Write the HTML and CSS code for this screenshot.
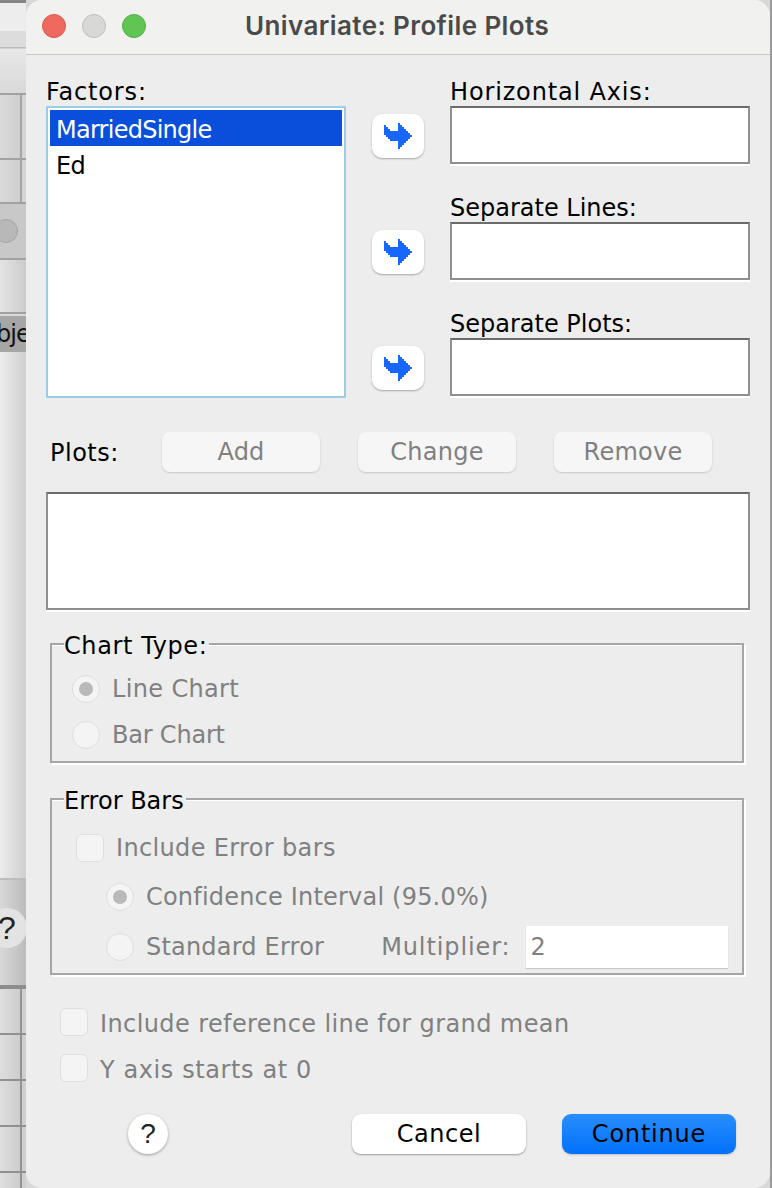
FILE: index.html
```html
<!DOCTYPE html>
<html lang="en">
<head>
  <meta charset="UTF-8" />
  <title>Univariate: Profile Plots</title>
  <link rel="stylesheet" href="styles.css">
</head>
<body>
  <div class="screen">
    <!-- bit of the data editor showing behind the dialog -->
    <div class="behind">
      <div class="strip strip-top"></div>
      <div class="strip strip-cell strip-cell-tall"></div>
      <div class="strip strip-cell"></div>
      <div class="strip strip-pill"><span class="pill"></span></div>
      <div class="strip strip-light"></div>
      <div class="strip strip-obj">bje</div>
      <div class="strip strip-long"></div>
      <div class="strip strip-help"><span class="help-back">?</span></div>
      <div class="strip strip-grid"></div>
      <div class="strip strip-grid"></div>
      <div class="strip strip-grid"></div>
      <div class="strip strip-grid"></div>
      <div class="strip strip-grid"></div>
    </div>

    <div class="dialog">
      <div class="titlebar">
        <span class="light red"></span>
        <span class="light grey"></span>
        <span class="light green"></span>
        <h1>Univariate: Profile Plots</h1>
      </div>

      <div class="content">
        <div class="top">
          <div class="factors">
            <label class="lbl wide">Factors:</label>
            <ul class="list">
              <li class="selected">MarriedSingle</li>
              <li>Ed</li>
            </ul>
          </div>
          <div class="targets">
            <div class="target">
              <button class="arrow-btn" type="button">
                <svg class="arrow" viewBox="0 0 28 26"><polygon points="14,0 16,0 16,2 18,2 18,4 20,4 20,6 22,6 22,8 24,8 24,10 26,10 26,12 28,12 28,14 26,14 26,16 24,16 24,18 22,18 22,20 20,20 20,22 18,22 18,24 16,24 16,26 14,26 14,18 6,18 6,16 4,16 4,14 2,14 2,12 0,12 0,2 2,2 2,4 4,4 4,6 6,6 6,8 14,8"/></svg>
              </button>
              <div class="field">
                <label class="lbl wide">Horizontal Axis:</label>
                <div class="box box-small"></div>
              </div>
            </div>
            <div class="target">
              <button class="arrow-btn" type="button">
                <svg class="arrow" viewBox="0 0 28 26"><polygon points="14,0 16,0 16,2 18,2 18,4 20,4 20,6 22,6 22,8 24,8 24,10 26,10 26,12 28,12 28,14 26,14 26,16 24,16 24,18 22,18 22,20 20,20 20,22 18,22 18,24 16,24 16,26 14,26 14,18 6,18 6,16 4,16 4,14 2,14 2,12 0,12 0,2 2,2 2,4 4,4 4,6 6,6 6,8 14,8"/></svg>
              </button>
              <div class="field">
                <label class="lbl">Separate Lines:</label>
                <div class="box box-small"></div>
              </div>
            </div>
            <div class="target">
              <button class="arrow-btn" type="button">
                <svg class="arrow" viewBox="0 0 28 26"><polygon points="14,0 16,0 16,2 18,2 18,4 20,4 20,6 22,6 22,8 24,8 24,10 26,10 26,12 28,12 28,14 26,14 26,16 24,16 24,18 22,18 22,20 20,20 20,22 18,22 18,24 16,24 16,26 14,26 14,18 6,18 6,16 4,16 4,14 2,14 2,12 0,12 0,2 2,2 2,4 4,4 4,6 6,6 6,8 14,8"/></svg>
              </button>
              <div class="field">
                <label class="lbl">Separate Plots:</label>
                <div class="box box-small"></div>
              </div>
            </div>
          </div>
        </div>

        <div class="plots-row">
          <label class="lbl plots-lbl">Plots:</label>
          <button class="btn-off" type="button">Add</button>
          <button class="btn-off" type="button">Change</button>
          <button class="btn-off" type="button">Remove</button>
        </div>
        <div class="box box-plots"></div>

        <fieldset class="group group-chart">
          <legend class="legend-wide">Chart Type:</legend>
          <div class="group-body">
            <div class="opt"><span class="radio on"></span><span class="off-text">Line Chart</span></div>
            <div class="opt"><span class="radio"></span><span class="off-text tight">Bar Chart</span></div>
          </div>
        </fieldset>

        <fieldset class="group group-error">
          <legend>Error Bars</legend>
          <div class="group-body">
            <div class="opt"><span class="check"></span><span class="off-text">Include Error bars</span></div>
            <div class="sub">
              <div class="opt"><span class="radio on"></span><span class="off-text conf">Confidence Interval (95.0%)</span></div>
              <div class="opt">
                <span class="radio"></span><span class="off-text conf">Standard Error</span>
                <span class="off-text mult-lbl">Multiplier:</span>
                <span class="mult-input">2</span>
              </div>
            </div>
          </div>
        </fieldset>

        <div class="bottom-checks">
          <div class="opt"><span class="check"></span><span class="off-text">Include reference line for grand mean</span></div>
          <div class="opt"><span class="check"></span><span class="off-text yaxis">Y axis starts at 0</span></div>
        </div>

        <div class="actions">
          <button class="help" type="button">?</button>
          <button class="btn cancel" type="button">Cancel</button>
          <button class="btn continue" type="button">Continue</button>
        </div>
      </div>
    </div>

    <div class="behind-right"></div>
  </div>
</body>
</html>
```

FILE: styles.css
```css
/* Reset and base styles */
* {
  box-sizing: border-box;
  margin: 0;
  padding: 0;
}
body {
  font-family: "DejaVu Sans", sans-serif;
  font-size: 24px;
  background: #d8d8d8;
  color: #000;
  overflow: hidden;
}
button {
  font-family: inherit;
}

.screen {
  display: flex;
  width: 772px;
  height: 1188px;
  overflow: hidden;
}

/* Editor window behind the dialog */
.behind {
  width: 26px;
  height: 1188px;
  flex-shrink: 0;
  display: flex;
  flex-direction: column;
  overflow: hidden;
}
.strip {
  flex-shrink: 0;
  border-bottom: 2px solid #a2a2a2;
  background: linear-gradient(90deg, #e6e6e6, #c4c4c4);
}
.strip-top {
  height: 95px;
  border-top: 3px solid #858585;
  background: linear-gradient(#ededed 0, #ededed 28px, #dcdcdc 28px, #dcdcdc 44px, #bbb 44px, #bbb 45px, #e8e8e8 46px, #d9d9d9 100%);
}
.strip-cell {
  height: 44px;
  background: linear-gradient(90deg, #dadada 0, #cfcfcf 20px, #a4a4a4 20px, #a4a4a4 22px, #d4d4d4 22px);
}
.strip-cell-tall {
  height: 65px;
}
.strip-pill {
  height: 56px;
  background: #c8c8c8;
  display: flex;
  align-items: center;
}
.pill {
  width: 24px;
  height: 24px;
  flex-shrink: 0;
  margin-left: -6px;
  border-radius: 50%;
  background: #b8b8b8;
  border: 1px solid #a4a4a4;
}
.strip-light {
  height: 54px;
  margin-bottom: 2px;
  background: linear-gradient(90deg, #e4e4e4, #cccccc);
}
.strip-obj {
  height: 36px;
  background: #a6a6a6;
  border-bottom: 0;
  line-height: 36px;
  letter-spacing: -1px;
  text-indent: -4px;
  white-space: nowrap;
  overflow: hidden;
  color: #111;
}
.strip-long {
  height: 528px;
  border-bottom: 2px solid #bdbdbd;
  background: linear-gradient(90deg, #ececec, #cfcfcf);
}
.strip-help {
  height: 109px;
  border-bottom: 4px solid #8d8d8d;
  background: linear-gradient(90deg, #d8d8d8, #bcbcbc);
  display: flex;
  align-items: center;
}
.help-back {
  width: 40px;
  height: 40px;
  flex-shrink: 0;
  margin-left: -13px;
  margin-top: -10px;
  border-radius: 50%;
  background: #e3e3e3;
  color: #222;
  font-family: "Liberation Sans", sans-serif;
  font-size: 32px;
  line-height: 40px;
  text-align: center;
}
.strip-grid {
  height: 46px;
  background: linear-gradient(90deg, #dedede 0, #cdcdcd 20px, #949494 20px, #949494 22px, #cfcfcf 22px);
  border-bottom-color: #909090;
}

.behind-right {
  flex: 1;
  background: #9a9a9a;
}

/* Dialog window */
.dialog {
  width: 744px;
  height: 1188px;
  flex-shrink: 0;
  background: #ededed;
  border-radius: 16px;
}
.titlebar {
  height: 55px;
  display: flex;
  align-items: center;
  padding-left: 16px;
  background: #f1f1f0;
  border-bottom: 1px solid #c9c9c9;
  border-radius: 16px 16px 0 0;
}
.light {
  width: 24px;
  height: 24px;
  margin-right: 16px;
  border-radius: 50%;
  margin-top: -3px;
}
.red {
  background: #ee6a5f;
  border: 1px solid #d9584e;
}
.grey {
  background: #d8d8d6;
  border: 1px solid #c0c0be;
}
.green {
  background: #61c554;
  border: 1px solid #52ad47;
}
.titlebar h1 {
  margin-left: 83px;
  margin-top: -3px;
  font-family: Inter, sans-serif;
  font-size: 26px;
  font-weight: 600;
  letter-spacing: 0.4px;
  color: #4a4a4a;
  white-space: nowrap;
}

.content {
  padding: 23px 20px 0;
}

.lbl {
  display: block;
  height: 28px;
  line-height: 28px;
  white-space: nowrap;
}
.wide {
  letter-spacing: 0.85px;
}

/* Top section with factor list and target boxes */
.top {
  display: flex;
  gap: 26px;
}
.factors {
  width: 300px;
}
.list {
  height: 292px;
  list-style: none;
  background: #fff;
  border: 2px solid #9bcde6;
  padding: 2px;
}
.list li {
  height: 36px;
  line-height: 40px;
  padding-left: 6px;
  letter-spacing: -0.75px;
}
.list .selected {
  background: #0a4fdc;
  color: #fff;
}
.targets {
  flex: 1;
}
.target {
  display: flex;
  gap: 26px;
  height: 116px;
}
.arrow-btn {
  width: 52px;
  height: 44px;
  margin-top: 36px;
  background: #fff;
  border: 0;
  border-radius: 10px;
  box-shadow: 0 1px 2px rgba(0, 0, 0, 0.3);
  display: flex;
  align-items: center;
  justify-content: center;
}
.arrow {
  width: 28px;
  height: 26px;
  fill: #1767ff;
  shape-rendering: crispEdges;
}
.field {
  width: 300px;
}
.box {
  background: #fff;
  border: 2px solid #8f8f8f;
  border-top-color: #6b6b6b;
  box-shadow: 0 2px 0 #fff;
}
.box-small {
  height: 58px;
}

/* Plots */
.plots-row {
  display: flex;
  align-items: center;
  margin-top: 6px;
  height: 40px;
}
.plots-lbl {
  width: 116px;
  padding-left: 4px;
  margin-top: 2px;
  letter-spacing: 0.5px;
}
.btn-off {
  width: 158px;
  height: 40px;
  margin-right: 38px;
  background: #f6f6f6;
  border: 0;
  border-radius: 8px;
  box-shadow: 0 1px 2px rgba(0, 0, 0, 0.16);
  color: #808080;
  font-size: 24px;
  letter-spacing: 0.25px;
}
.box-plots {
  height: 118px;
  margin-top: 20px;
}

/* Etched groups */
.group {
  margin-left: 4px;
  width: 694px;
  border: 2px solid #a6a6a6;
  box-shadow: 2px 2px 0 #fff, inset 0 1px 0 #fff;
}
.group legend {
  margin-left: 12px;
  padding-right: 2px;
  height: 28px;
  line-height: 33px;
  background: #ededed;
}
.group .legend-wide {
  line-height: 32px;
  letter-spacing: 0.6px;
}
.group-chart {
  margin-top: 20px;
  height: 133px;
}
.group-chart .group-body {
  padding: 8px 0 0 20px;
}
.group-error {
  margin-top: 22px;
  height: 190px;
}
.group-error .group-body {
  padding: 12px 0 0 24px;
}

.opt {
  display: flex;
  align-items: center;
  height: 46px;
  color: #808080;
  white-space: nowrap;
}
.off-text {
  color: #808080;
  letter-spacing: 0.35px;
}
.off-text.tight {
  letter-spacing: -0.2px;
}
.off-text.conf {
  letter-spacing: 0.2px;
}
.off-text.yaxis {
  letter-spacing: 0.6px;
}
.radio {
  width: 28px;
  height: 28px;
  flex-shrink: 0;
  margin-right: 12px;
  border-radius: 50%;
  background: #f4f4f4;
  border: 1px solid #dedede;
  display: flex;
  align-items: center;
  justify-content: center;
}
.radio.on::after {
  content: "";
  width: 14px;
  height: 14px;
  border-radius: 50%;
  background: #b9b9b9;
}
.check {
  width: 28px;
  height: 28px;
  flex-shrink: 0;
  margin-right: 12px;
  border-radius: 6px;
  background: #f4f4f4;
  border: 1px solid #dedede;
}
.sub {
  padding-left: 30px;
  margin-top: 1px;
}
.sub .opt {
  height: 50px;
}
.off-text.mult-lbl {
  margin-left: 57px;
  margin-right: 15px;
  letter-spacing: 0.9px;
}
.mult-input {
  width: 202px;
  height: 42px;
  padding-left: 5px;
  line-height: 42px;
  background: #fff;
  box-shadow: 0 1px 1px rgba(0, 0, 0, 0.15);
}

.bottom-checks {
  margin-top: 24px;
  padding-left: 14px;
}
.bottom-checks .off-text {
  padding-top: 3px;
  letter-spacing: 0.4px;
}
.bottom-checks .off-text.yaxis {
  letter-spacing: 0.6px;
}

/* Bottom buttons */
.actions {
  display: flex;
  align-items: center;
  margin-top: 23px;
  padding-left: 82px;
}
.help {
  width: 40px;
  height: 40px;
  margin-right: 184px;
  border: 0;
  border-radius: 50%;
  background: #fff;
  box-shadow: 0 1px 3px rgba(0, 0, 0, 0.35);
  color: #222;
  font-family: "Liberation Sans", sans-serif;
  font-size: 28px;
}
.btn {
  width: 174px;
  height: 40px;
  border: 0;
  border-radius: 9px;
  font-size: 24px;
  color: #000;
}
.cancel {
  background: #fff;
  box-shadow: 0 1px 2px rgba(0, 0, 0, 0.35);
  margin-right: 36px;
  letter-spacing: 0.5px;
}
.continue {
  background: linear-gradient(#2a8dfd, #0071fb);
  box-shadow: 0 1px 2px rgba(0, 0, 0, 0.2);
  letter-spacing: 0.8px;
}
```
